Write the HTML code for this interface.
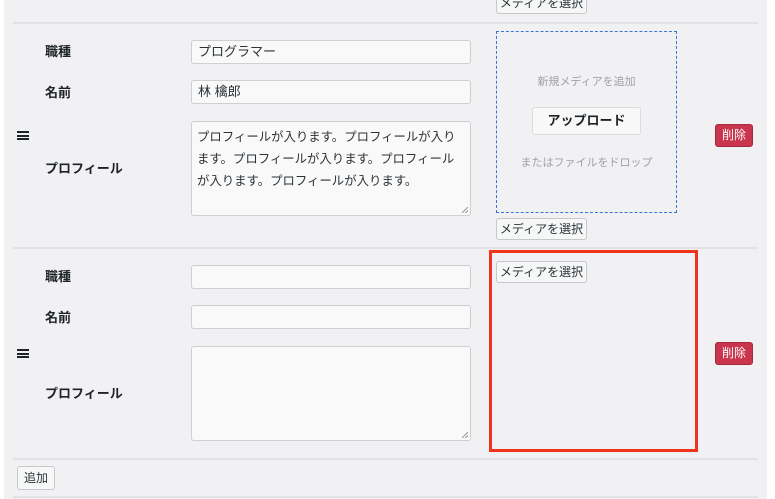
<!DOCTYPE html>
<html><head><meta charset="utf-8"><style>
*{box-sizing:border-box;margin:0;padding:0}
body{width:775px;height:499px;background:#fff;position:relative;overflow:hidden;font-family:"Liberation Sans","Noto Sans CJK JP",sans-serif;color:#1d2327}
.panel{position:absolute;left:4px;top:0;width:763px;height:499px;background:#f1f1f3}
.a{position:absolute}
.sep{position:absolute;left:13px;width:745px;height:2px;background:#e2e2e4}
.lbl{position:absolute;left:45px;font-size:13px;font-weight:bold;line-height:16px}
.inp{position:absolute;left:191px;width:280px;background:#f9f9f9;border:1px solid #cfcfd3;border-radius:3px;font-size:13px;padding:0 6px;color:#2c3338}
.btn{position:absolute;background:#f6f7f7;border:1px solid #c8c8cc;border-radius:3px;font-size:12px;text-align:center;color:#2c3338}
.del{position:absolute;left:715px;width:38px;height:23px;background:#c8354c;border:1px solid #a52a3e;border-radius:3px;color:#fff;font-size:12px;line-height:21px;text-align:center}
.ham{position:absolute;left:17px;width:12px;height:9px;border-top:2px solid #1d2327;border-bottom:2px solid #1d2327}
.ham:after{content:"";position:absolute;left:0;top:1.5px;width:12px;height:2px;background:#1d2327}
.rs{position:absolute;right:2px;bottom:2px;width:6px;height:6px;background:linear-gradient(135deg,transparent 45%,#999 45%,#999 55%,transparent 55%,transparent 75%,#999 75%,#999 85%,transparent 85%)}
</style></head><body>
<div class="panel"></div>
<div class="btn" style="left:496px;top:-8px;width:91px;height:22px;line-height:20px">メディアを選択</div>
<div class="sep" style="top:22px"></div>

<div class="lbl" style="top:44px">職種</div>
<div class="lbl" style="top:85px">名前</div>
<div class="lbl" style="top:161px">プロフィール</div>
<div class="ham" style="top:131px"></div>
<div class="inp" style="top:40px;height:24px;line-height:22px">プログラマー</div>
<div class="inp" style="top:80px;height:24px;line-height:22px">林 檎郎</div>
<div class="inp" style="top:121px;height:95px;line-height:22px;padding:4px 5px;font-size:12.4px">プロフィールが入ります。プロフィールが入ります。プロフィールが入ります。プロフィールが入ります。プロフィールが入ります。<div class="rs"></div></div>
<div class="a" style="left:496px;top:31px;width:181px;height:182px;border:1px dashed #3b74d3"></div>
<div class="a" style="left:496px;top:73px;width:181px;text-align:center;font-size:11px;color:#a0a0a8">新規メディアを追加</div>
<div class="btn" style="left:532px;top:107px;width:109px;height:28px;line-height:26px;font-size:13px;font-weight:bold;background:#f8f8f8;border-color:#dcdcde;color:#1d2327">アップロード</div>
<div class="a" style="left:496px;top:154px;width:181px;text-align:center;font-size:11px;color:#a0a0a8">またはファイルをドロップ</div>
<div class="del" style="top:124px">削除</div>
<div class="btn" style="left:496px;top:218px;width:91px;height:22px;line-height:20px">メディアを選択</div>
<div class="sep" style="top:247px"></div>

<div class="lbl" style="top:269px">職種</div>
<div class="lbl" style="top:310px">名前</div>
<div class="lbl" style="top:386px">プロフィール</div>
<div class="ham" style="top:349px"></div>
<div class="inp" style="top:265px;height:24px"></div>
<div class="inp" style="top:305px;height:24px"></div>
<div class="inp" style="top:346px;height:95px"><div class="rs"></div></div>
<div class="btn" style="left:496px;top:261px;width:91px;height:22px;line-height:20px">メディアを選択</div>
<div class="a" style="left:489px;top:250px;width:209px;height:202px;border:3px solid #f0331d"></div>
<div class="del" style="top:342px">削除</div>
<div class="sep" style="top:458px"></div>
<div class="btn" style="left:17px;top:466px;width:38px;height:24px;line-height:22px">追加</div>
<div class="sep" style="top:496px"></div>
</body></html>
